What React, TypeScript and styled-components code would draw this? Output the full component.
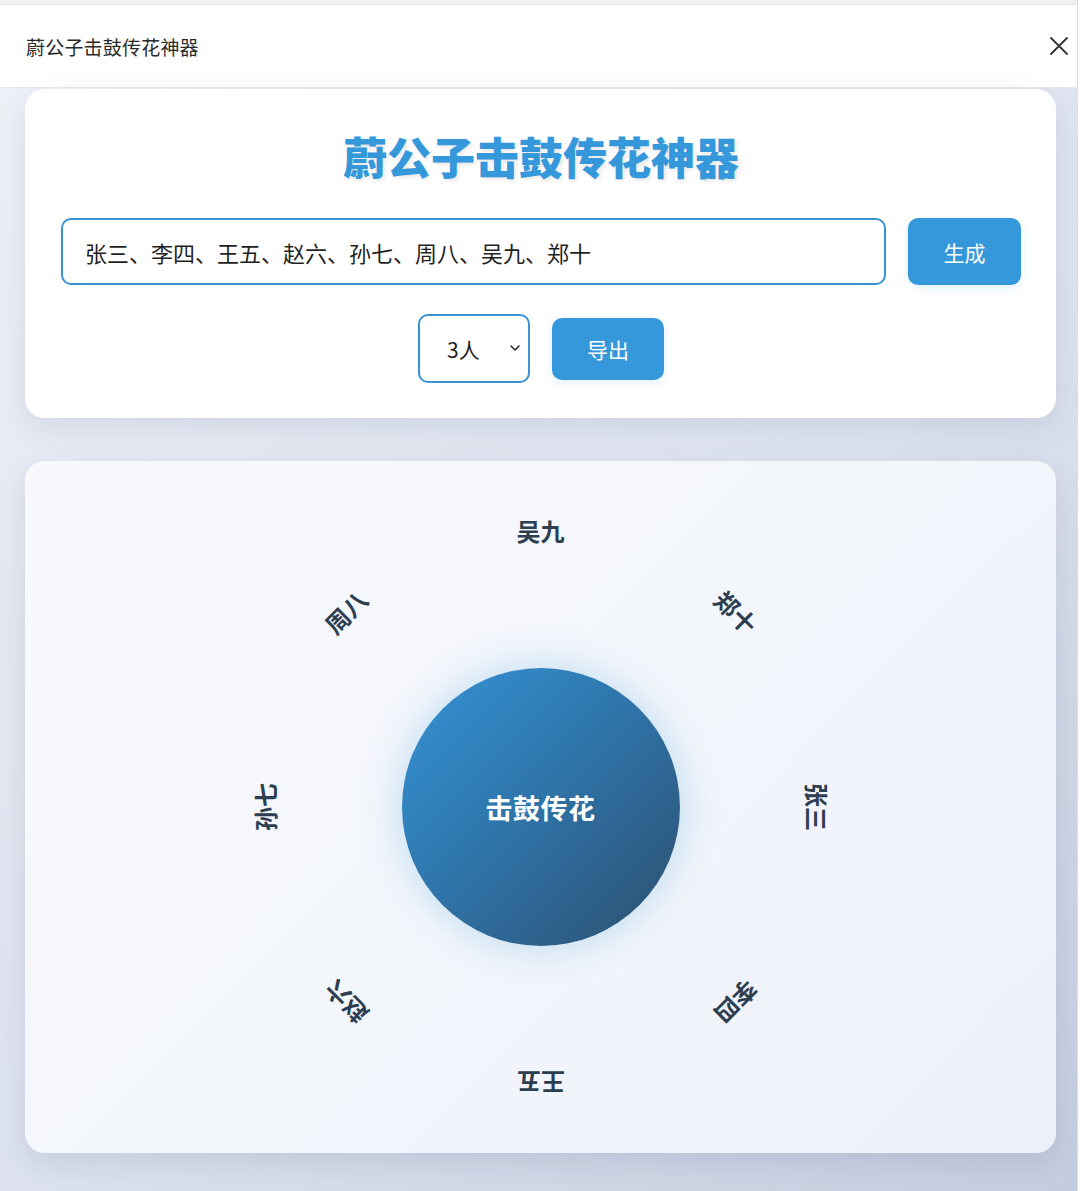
import React, { useState } from 'react';
import styled, { createGlobalStyle } from 'styled-components';

const GlobalStyle = createGlobalStyle`
    html, body {
        margin: 0;
        padding: 0;
        background: #ffffff;
    }

    body {
        font-family: "Noto Sans CJK SC", "Noto Sans", "Liberation Sans", sans-serif;
    }
`;

const Frame = styled.div`
    width: 1077px;
    min-height: 1191px;
    border-right: 1px solid #dcdfe5;
    display: flex;
    flex-direction: column;
`;

const TopStrip = styled.div`
    height: 4px;
    background: #f1f1f3;
    border-bottom: 1px solid #e4e4e8;
`;

const Header = styled.header`
    height: 82px;
    display: flex;
    align-items: center;
    justify-content: space-between;
    padding: 0 8px 0 26px;
    background: #ffffff;
    border-bottom: 1px solid #e8e9ee;
`;

const HeaderTitle = styled.span`
    font-size: 19px;
    color: #2a2a2a;
    letter-spacing: 0.2px;
`;

const CloseButton = styled.button`
    border: none;
    background: none;
    padding: 0;
    width: 20px;
    height: 20px;
    cursor: pointer;
    color: #333;
    display: flex;
`;

const Main = styled.main`
    flex: 1;
    display: flex;
    flex-direction: column;
    gap: 43px;
    padding: 1px 21px 38px 25px;
    background: linear-gradient(140deg, #eef0f8 0%, #dde2ee 55%, #c4cddf 100%);
`;

const ControlCard = styled.section`
    height: 329px;
    box-sizing: border-box;
    padding: 41px 35px 35px 36px;
    background: #ffffff;
    border-radius: 20px;
    box-shadow: 0 10px 30px rgba(60, 80, 120, 0.12);
    display: flex;
    flex-direction: column;
    align-items: stretch;
`;

const Title = styled.h1`
    margin: 0;
    text-align: center;
    font-size: 44px;
    line-height: 53px;
    font-weight: 900;
    color: #3498db;
    text-shadow: 2px 2px 4px rgba(0, 0, 0, 0.1);
`;

const InputRow = styled.div`
    display: flex;
    gap: 22px;
    margin-top: 35px;
`;

const NamesInput = styled.input`
    flex: 1;
    height: 67px;
    box-sizing: border-box;
    padding: 0 22px;
    font-family: inherit;
    font-size: 22px;
    color: #1f1f1f;
    border: 2px solid #3a92d4;
    border-radius: 10px;
    outline: none;
    background: #fff;
`;

const PrimaryButton = styled.button<{ $w: number; $h: number }>`
    width: ${p => p.$w}px;
    height: ${p => p.$h}px;
    border: none;
    border-radius: 10px;
    background: #3498db;
    color: #ffffff;
    font-family: inherit;
    font-size: 21px;
    cursor: pointer;
    box-shadow: 0 3px 8px rgba(52, 152, 219, 0.15);
`;

const OptionRow = styled.div`
    display: flex;
    justify-content: center;
    align-items: center;
    gap: 22px;
    margin-top: 29px;
`;

const SelectWrap = styled.div`
    position: relative;
    width: 112px;
    height: 69px;
`;

const CountSelect = styled.select`
    appearance: none;
    width: 100%;
    height: 100%;
    box-sizing: border-box;
    padding: 0 0 0 27px;
    font-family: inherit;
    font-size: 21px;
    color: #1f1f1f;
    border: 2px solid #3a92d4;
    border-radius: 10px;
    background: #fff;
    outline: none;
`;

const Chevron = styled.svg`
    position: absolute;
    right: 9px;
    top: 30px;
    pointer-events: none;
`;

const CircleCard = styled.section`
    height: 692px;
    border-radius: 20px;
    background: linear-gradient(135deg, #f8f9fd 0%, #f3f6fb 50%, #edf0f8 100%);
    box-shadow: 0 10px 30px rgba(60, 80, 120, 0.14);
    display: flex;
    align-items: center;
    justify-content: center;
`;

const Stage = styled.div`
    position: relative;
    width: 600px;
    height: 600px;
    display: flex;
    align-items: center;
    justify-content: center;
`;

const Drum = styled.div`
    width: 278px;
    height: 278px;
    border-radius: 50%;
    background: linear-gradient(135deg, #3593d6 0%, #2f76ac 45%, #2c4e6d 100%);
    box-shadow: 0 0 40px rgba(52, 152, 219, 0.3);
    display: flex;
    align-items: center;
    justify-content: center;
    color: #ffffff;
    font-size: 27px;
    font-weight: 700;
    letter-spacing: 0.5px;
`;

const Seat = styled.span`
    position: absolute;
    left: 50%;
    top: 50%;
    font-size: 24px;
    line-height: 30px;
    font-weight: 700;
    color: #2c3e50;
    white-space: nowrap;
`;

const names = ['张三', '李四', '王五', '赵六', '孙七', '周八', '吴九', '郑十'];
const RADIUS = 276;

export default function App() {
    const [text, setText] = useState(names.join('、'));
    const [count, setCount] = useState('3');

    return (
        <>
            <GlobalStyle />
            <Frame>
                <TopStrip />
                <Header>
                    <HeaderTitle>蔚公子击鼓传花神器</HeaderTitle>
                    <CloseButton aria-label='close'>
                        <svg width='20' height='20' viewBox='0 0 20 20' fill='none' stroke='currentColor' strokeWidth='1.8' strokeLinecap='round'>
                            <path d='M2 2 L18 18 M18 2 L2 18' />
                        </svg>
                    </CloseButton>
                </Header>
                <Main>
                    <ControlCard>
                        <Title>蔚公子击鼓传花神器</Title>
                        <InputRow>
                            <NamesInput value={text} onChange={e => setText(e.target.value)} />
                            <PrimaryButton $w={113} $h={67}>生成</PrimaryButton>
                        </InputRow>
                        <OptionRow>
                            <SelectWrap>
                                <CountSelect value={count} onChange={e => setCount(e.target.value)}>
                                    <option value='2'>2人</option>
                                    <option value='3'>3人</option>
                                    <option value='4'>4人</option>
                                </CountSelect>
                                <Chevron width='12' height='8' viewBox='0 0 12 8' fill='none' stroke='#222' strokeWidth='1.5' strokeLinecap='round' strokeLinejoin='round'>
                                    <path d='M2 2 L6 6 L10 2' />
                                </Chevron>
                            </SelectWrap>
                            <PrimaryButton $w={112} $h={62}>导出</PrimaryButton>
                        </OptionRow>
                    </ControlCard>
                    <CircleCard>
                        <Stage>
                            <Drum>击鼓传花</Drum>
                            {names.map((name, i) => {
                                const angle = (90 + i * 45) % 360;
                                return (
                                    <Seat
                                        key={name}
                                        style={{ transform: `translate(-50%, -50%) rotate(${angle}deg) translateY(-${RADIUS}px)` }}
                                    >
                                        {name}
                                    </Seat>
                                );
                            })}
                        </Stage>
                    </CircleCard>
                </Main>
            </Frame>
        </>
    );
}
